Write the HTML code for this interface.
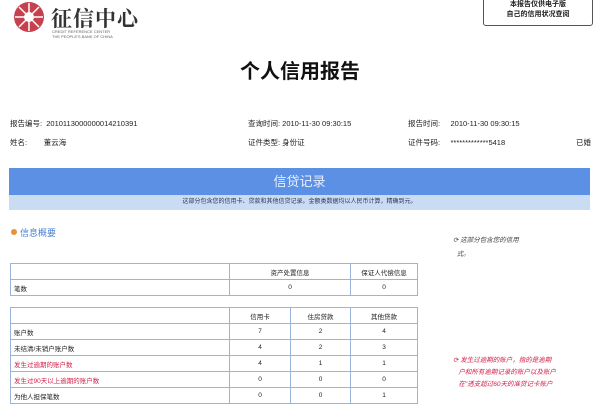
<!DOCTYPE html>
<html><head><meta charset="utf-8"><style>
body{margin:0;width:600px;height:400px;overflow:hidden;background:#fff;font-family:"Liberation Sans","Noto Sans CJK SC",sans-serif;position:relative;color:#222}
.a{position:absolute;white-space:nowrap}
.s{font-size:7.5px}
table{position:absolute;border-collapse:collapse;font-size:6.5px;left:10px;width:408px}
td{border:1px solid #9ab4dc;height:15px;padding:0 3px;text-align:center}
td:first-child{text-align:left}
.r{color:#d0204a}
</style></head><body>
<svg class="a" style="left:13px;top:1px" width="32" height="32" viewBox="0 0 32 32"><circle cx="16" cy="16" r="15" fill="#c6404e"/><circle cx="16" cy="16" r="5" fill="#fff"/><path d="M16 2v28M2 16h28M6 6l20 20M26 6L6 26" stroke="#fff" stroke-width="1.5"/></svg>
<div class="a" style="left:51px;top:3px;font:bold 21px 'Noto Serif CJK SC',serif;color:#333;letter-spacing:1px">征信中心</div>
<div class="a" style="left:52px;top:29px;font-size:4px;color:#666;line-height:5px">CREDIT REFERENCE CENTER<br>THE PEOPLE'S BANK OF CHINA</div>
<div class="a" style="left:483px;top:-3px;width:108px;height:25px;border:1px solid #555;border-radius:3px;font-size:7px;font-weight:bold;line-height:10px;text-align:center;padding-top:2px">本报告仅供电子版<br>自己的信用状况查阅</div>
<div class="a" style="left:0;width:600px;top:55px;text-align:center;font-size:20px;font-weight:bold;color:#111">个人信用报告</div>
<div class="a s" style="left:10px;top:118px">报告编号: &nbsp;2010113000000014210391</div>
<div class="a s" style="left:248px;top:118px">查询时间: 2010-11-30 09:30:15</div>
<div class="a s" style="left:408px;top:118px">报告时间: &nbsp;&nbsp;&nbsp;&nbsp;2010-11-30 09:30:15</div>
<div class="a s" style="left:10px;top:137px">姓名: &nbsp;&nbsp;&nbsp;&nbsp;&nbsp;&nbsp;&nbsp;董云海</div>
<div class="a s" style="left:248px;top:137px">证件类型: 身份证</div>
<div class="a s" style="left:408px;top:137px">证件号码: &nbsp;&nbsp;&nbsp;&nbsp;*************5418</div>
<div class="a s" style="left:576px;top:137px">已婚</div>
<div class="a" style="left:9px;top:168px;width:581px;height:27px;background:#5b90e4;color:#e8f0ff;font-size:13px;text-align:center;line-height:27px">信贷记录</div>
<div class="a" style="left:9px;top:195px;width:581px;height:15px;background:#c9dcf3;color:#335;font-size:6px;text-align:center;line-height:15px">这部分包含您的信用卡、贷款和其他信贷记录。金额类数据均以人民币计算，精确到元。</div>
<div class="a" style="left:11px;top:229px;width:6px;height:6px;border-radius:50%;background:#e8903a"></div>
<div class="a" style="left:20px;top:226px;font-size:9px;color:#4b7fd0">信息概要</div>
<div class="a" style="left:453px;top:234px;font-size:6.5px;font-style:italic;line-height:14px;color:#444">⟳ 这部分包含您的信用<br>&nbsp;&nbsp;式。</div>
<div class="a r" style="left:453px;top:355px;font-size:6.5px;font-style:italic;line-height:12px">⟳ 发生过逾期的账户，指的是逾期<br>&nbsp;&nbsp;&nbsp;户和所有逾期记录的账户以及账户<br>&nbsp;&nbsp;&nbsp;在"透支超过60天的准贷记卡账户</div>
<table style="top:263px"><tr><td style="width:212px"></td><td>资产处置信息</td><td style="width:60px">保证人代偿信息</td></tr><tr><td>笔数</td><td>0</td><td>0</td></tr></table>
<table style="top:307px"><tr><td style="width:212px"></td><td>信用卡</td><td style="width:53px">住房贷款</td><td style="width:60px">其他贷款</td></tr>
<tr><td>账户数</td><td>7</td><td>2</td><td>4</td></tr>
<tr><td>未结清/未销户账户数</td><td>4</td><td>2</td><td>3</td></tr>
<tr><td class="r">发生过逾期的账户数</td><td>4</td><td>1</td><td>1</td></tr>
<tr><td class="r">发生过90天以上逾期的账户数</td><td>0</td><td>0</td><td>0</td></tr>
<tr><td>为他人担保笔数</td><td>0</td><td>0</td><td>1</td></tr></table>
</body></html>
